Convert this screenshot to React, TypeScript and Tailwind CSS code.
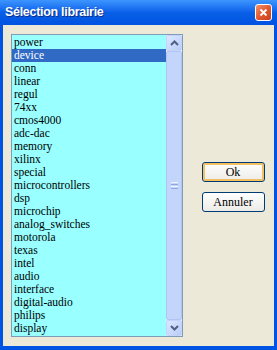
import React from 'react'

const items = [
  'power', 'device', 'conn', 'linear', 'regul', '74xx', 'cmos4000', 'adc-dac', 'memory', 'xilinx',
  'special', 'microcontrollers', 'dsp', 'microchip', 'analog_switches', 'motorola', 'texas', 'intel',
  'audio', 'interface', 'digital-audio', 'philips', 'display',
]

function Arrow({ up }: { up?: boolean }) {
  return (
    <svg width="9" height="6" viewBox="0 0 9 6">
      <path d={up ? 'M1 5 L4.5 1.5 L8 5' : 'M1 1 L4.5 4.5 L8 1'} fill="none" stroke="#4d6185" strokeWidth="2" />
    </svg>
  )
}

export default function App() {
  return (
    <div className="w-[277px] h-[350px] flex flex-col bg-[#0054e3] overflow-hidden">
      {/* Title bar */}
      <div className="h-[25px] shrink-0 flex items-center justify-between pl-[5px] pr-[5px] bg-gradient-to-b from-[#3d95ff] via-[#0a5fe8] to-[#0053e1]">
        <span className="text-white font-bold text-[12.5px] leading-none [font-family:'Liberation_Sans',sans-serif] tracking-[-0.3px] [text-shadow:1px_1px_0_#0a2d8a]">
          Sélection librairie
        </span>
        <div className="w-[17px] h-[17px] rounded-[3px] border border-white bg-gradient-to-br from-[#f0906a] via-[#e2582f] to-[#c7401c] flex items-center justify-center">
          <svg width="9" height="9" viewBox="0 0 9 9">
            <path d="M1.5 1.5 L7.5 7.5 M7.5 1.5 L1.5 7.5" stroke="white" strokeWidth="1.8" />
          </svg>
        </div>
      </div>

      {/* Body */}
      <div className="flex-1 flex mx-[3px] mb-[4px] bg-[#ece9d8] pt-[9px] pl-[8px] pb-[9px]">
        <div className="w-[172px] flex border border-[#7f9db9] bg-[#99ffff]">
          <div className="flex-1 pt-[1px] [font-family:'Liberation_Serif',serif] text-[11.5px] leading-[13px] text-black">
            {items.map((it, i) => (
              <div
                key={it}
                className={`h-[13px] pl-[2px] ${i === 1 ? 'bg-[#316ac5] text-white' : ''}`}
              >
                {it}
              </div>
            ))}
          </div>
          {/* Scrollbar */}
          <div className="w-[16px] flex flex-col bg-[#f3f1ec]">
            <div className="h-[16px] shrink-0 rounded-[2px] border border-[#c3d3fd] bg-gradient-to-br from-[#dde7fe] to-[#b9cdf9] flex items-center justify-center">
              <Arrow up />
            </div>
            <div className="flex-1 rounded-[2px] border border-[#aec5f6] bg-[#c4d5fc] flex items-center justify-center">
              <div className="flex flex-col gap-[1px]">
                <div className="w-[7px] h-[1px] bg-[#eef4fe]" />
                <div className="w-[7px] h-[1px] bg-[#8ca5e4]" />
                <div className="w-[7px] h-[1px] bg-[#eef4fe]" />
                <div className="w-[7px] h-[1px] bg-[#8ca5e4]" />
              </div>
            </div>
            <div className="h-[16px] shrink-0 rounded-[2px] border border-[#c3d3fd] bg-gradient-to-br from-[#dde7fe] to-[#b9cdf9] flex items-center justify-center">
              <Arrow />
            </div>
          </div>
        </div>

        <div className="flex-1 flex flex-col items-center pt-[128px] gap-[10px] pl-[14px] pr-[5px]">
          <button className="w-[63px] h-[20px] rounded-[3px] border border-[#003c74] bg-gradient-to-b from-[#ffffff] to-[#ecebe6] shadow-[inset_0_0_0_2px_#f4c061] [font-family:'Liberation_Serif',serif] text-[12px] leading-none text-black">
            Ok
          </button>
          <button className="w-[63px] h-[20px] rounded-[3px] border border-[#003c74] bg-gradient-to-b from-[#ffffff] to-[#ecebe6] [font-family:'Liberation_Serif',serif] text-[12px] leading-none text-black">
            Annuler
          </button>
        </div>
      </div>
    </div>
  )
}
